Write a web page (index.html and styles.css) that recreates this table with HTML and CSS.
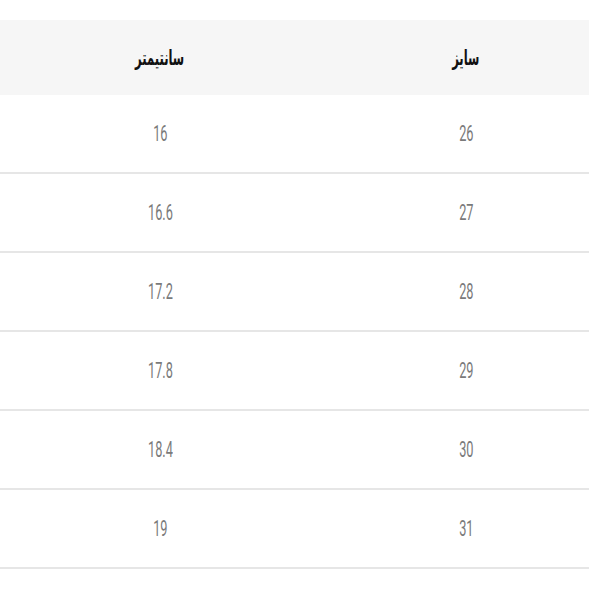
FILE: index.html
```html
<!DOCTYPE html>
<html lang="fa">
<head>
<meta charset="utf-8">
<title>جدول سایز</title>
<link rel="stylesheet" href="styles.css">
</head>
<body>
<div class="wrap">
  <table class="size-table">
    <thead>
      <tr>
        <th class="col-size"><span class="head">سایز</span></th>
        <th class="col-cm"><span class="head">سانتیمتر</span></th>
      </tr>
    </thead>
    <tbody>
      <tr><td><span class="num">26</span></td><td><span class="num">16</span></td></tr>
      <tr><td><span class="num">27</span></td><td><span class="num">16.6</span></td></tr>
      <tr><td><span class="num">28</span></td><td><span class="num">17.2</span></td></tr>
      <tr><td><span class="num">29</span></td><td><span class="num">17.8</span></td></tr>
      <tr><td><span class="num">30</span></td><td><span class="num">18.4</span></td></tr>
      <tr><td><span class="num">31</span></td><td><span class="num">19</span></td></tr>
    </tbody>
  </table>
</div>
</body>
</html>
```
FILE: styles.css
```css
html, body {
  margin: 0;
  padding: 0;
  background: #ffffff;
}
body {
  font-family: "DejaVu Sans", sans-serif;
}
.wrap {
  direction: rtl;
  width: 589px;
  overflow: hidden;
  padding-top: 20px;
}
.size-table {
  width: 612px;
  border-collapse: collapse;
  table-layout: fixed;
}
.col-size { width: 246px; }
.col-cm { width: 366px; }
.size-table thead tr {
  background: #f6f6f6;
  height: 75px;
}
.size-table th {
  padding: 0;
  text-align: center;
  vertical-align: middle;
}
.size-table td {
  padding: 0;
  height: 77px;
  text-align: center;
  vertical-align: middle;
  border-bottom: 2px solid #e6e6e6;
}
.head {
  display: inline-block;
  font-family: "DejaVu Sans", sans-serif;
  font-weight: bold;
  font-size: 21px;
  color: #111111;
  transform: scaleX(0.55);
}
.num {
  display: inline-block;
  direction: ltr;
  font-family: Roboto, "Liberation Sans", sans-serif;
  font-weight: 400;
  font-size: 22px;
  color: #7a7a7a;
  transform: scaleX(0.58);
}
```
